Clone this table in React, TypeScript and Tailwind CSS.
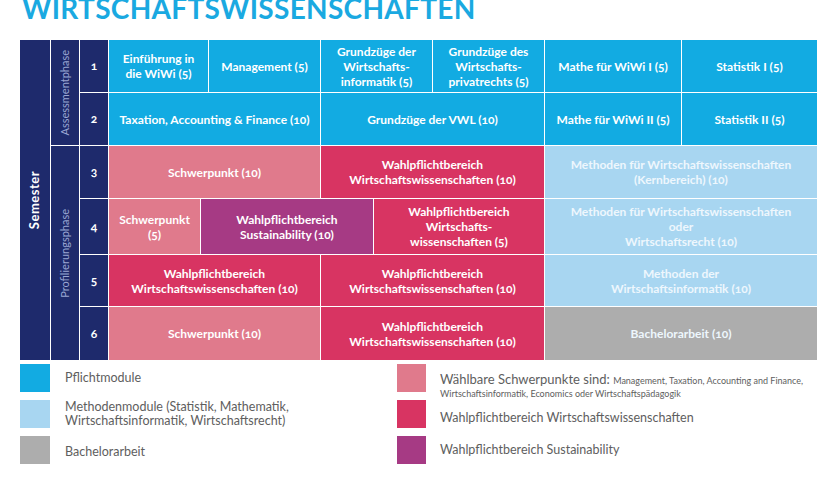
import React from "react";

const CYAN = "bg-[#12abe2]";
const LIGHT = "bg-[#a8d6f1]";
const PINK = "bg-[#e07a8c]";
const RED = "bg-[#d83462]";
const PURPLE = "bg-[#a63a84]";
const GREY = "bg-[#adadad]";
const NAVY = "bg-[#1e2a6c]";

function Cell({ bg, span, children, light }: { bg: string; span: string; children: React.ReactNode; light?: boolean }) {
  return (
    <div
      className={`${bg} ${span} flex items-center justify-center text-center px-1 text-[12px] leading-[15px] font-bold oldstyle-nums ${
        light ? "text-[#eef7fd]" : "text-white"
      }`}
    >
      <span>{children}</span>
    </div>
  );
}

function Num({ n }: { n: string }) {
  return (
    <div className={`${NAVY} flex items-center justify-center text-white font-bold text-[12px] oldstyle-nums`}>{n}</div>
  );
}

function LegendItem({ color, children, top }: { color: string; children: React.ReactNode; top?: boolean }) {
  return (
    <div className={`flex ${top ? "items-start" : "items-center"} h-[28px]`}>
      <div className={`${color} w-[30px] h-[28px] shrink-0`} />
      <div className="ml-[15px] text-[12.5px] leading-[14px] text-[#5e5e5e]">{children}</div>
    </div>
  );
}

export default function App() {
  return (
    <div className="w-[840px] h-[480px] bg-white overflow-hidden font-['Lato',sans-serif]">
      <h1 className="-mt-[6px] ml-[22px] text-[28px] leading-[28px] font-bold text-[#1aa9e1] whitespace-nowrap tracking-[0.3px]">
        WIRTSCHAFTSWISSENSCHAFTEN
      </h1>
      <div className="mt-[18px] ml-[20px] w-[797px] grid grid-cols-[30px_28px_28px_91px_7px_111px_52px_58px_111px_136px_135px] grid-rows-[52px_52px_52px_55px_51px_53px] gap-px bg-white">
        <div className={`${NAVY} row-span-6 flex items-center justify-center`}>
          <span className="[writing-mode:vertical-rl] rotate-180 text-white font-bold text-[13px] tracking-[0.5px]">Semester</span>
        </div>
        <div className={`${NAVY} row-span-2 flex items-center justify-center`}>
          <span className="[writing-mode:vertical-rl] rotate-180 text-[#9aa6d3] text-[11px]">Assessmentphase</span>
        </div>
        <Num n="1" />
        <Cell bg={CYAN} span="col-span-2">Einführung in<br />die WiWi (5)</Cell>
        <Cell bg={CYAN} span="">Management (5)</Cell>
        <Cell bg={CYAN} span="col-span-2">Grundzüge der<br />Wirtschafts-<br />informatik (5)</Cell>
        <Cell bg={CYAN} span="">Grundzüge des<br />Wirtschafts-<br />privatrechts (5)</Cell>
        <Cell bg={CYAN} span="">Mathe für WiWi I (5)</Cell>
        <Cell bg={CYAN} span="">Statistik I (5)</Cell>

        <Num n="2" />
        <Cell bg={CYAN} span="col-span-3">Taxation, Accounting &amp; Finance (10)</Cell>
        <Cell bg={CYAN} span="col-span-3">Grundzüge der VWL (10)</Cell>
        <Cell bg={CYAN} span="">Mathe für WiWi II (5)</Cell>
        <Cell bg={CYAN} span="">Statistik II (5)</Cell>

        <div className={`${NAVY} row-span-4 flex items-center justify-center`}>
          <span className="[writing-mode:vertical-rl] rotate-180 text-[#9aa6d3] text-[11px]">Profilierungsphase</span>
        </div>
        <Num n="3" />
        <Cell bg={PINK} span="col-span-3">Schwerpunkt (10)</Cell>
        <Cell bg={RED} span="col-span-3">Wahlpflichtbereich<br />Wirtschaftswissenschaften (10)</Cell>
        <Cell bg={LIGHT} span="col-span-2" light>Methoden für Wirtschaftswissenschaften<br />(Kernbereich) (10)</Cell>

        <Num n="4" />
        <Cell bg={PINK} span="">Schwerpunkt<br />(5)</Cell>
        <Cell bg={PURPLE} span="col-span-3">Wahlpflichtbereich<br />Sustainability (10)</Cell>
        <Cell bg={RED} span="col-span-2">Wahlpflichtbereich<br />Wirtschafts-<br />wissenschaften (5)</Cell>
        <Cell bg={LIGHT} span="col-span-2" light>Methoden für Wirtschaftswissenschaften<br />oder<br />Wirtschaftsrecht (10)</Cell>

        <Num n="5" />
        <Cell bg={RED} span="col-span-3">Wahlpflichtbereich<br />Wirtschaftswissenschaften (10)</Cell>
        <Cell bg={RED} span="col-span-3">Wahlpflichtbereich<br />Wirtschaftswissenschaften (10)</Cell>
        <Cell bg={LIGHT} span="col-span-2" light>Methoden der<br />Wirtschaftsinformatik (10)</Cell>

        <Num n="6" />
        <Cell bg={PINK} span="col-span-3">Schwerpunkt (10)</Cell>
        <Cell bg={RED} span="col-span-3">Wahlpflichtbereich<br />Wirtschaftswissenschaften (10)</Cell>
        <Cell bg={GREY} span="col-span-2" light>Bachelorarbeit (10)</Cell>
      </div>

      <div className="mt-[4px] ml-[20px] flex">
        <div className="w-[377px] flex flex-col gap-[8px]">
          <LegendItem color={CYAN}>Pflichtmodule</LegendItem>
          <LegendItem color={LIGHT}>Methodenmodule (Statistik, Mathematik,<br />Wirtschaftsinformatik, Wirtschaftsrecht)</LegendItem>
          <LegendItem color={GREY}><span className="relative top-[2px]">Bachelorarbeit</span></LegendItem>
        </div>
        <div className="flex flex-col gap-[8px]">
          <div className="flex items-start h-[28px]">
            <div className={`${PINK} w-[29px] h-[28px] shrink-0`} />
            <div className="ml-[14px] pt-[8px] text-[#5e5e5e] leading-[12px]">
              <div className="whitespace-nowrap">
                <span className="text-[13px]">Wählbare Schwerpunkte sind: </span>
                <span className="text-[9px]">Management, Taxation, Accounting and Finance,</span>
              </div>
              <div className="text-[9px] leading-[12px] mt-[1px]">Wirtschaftsinformatik, Economics oder Wirtschaftspädagogik</div>
            </div>
          </div>
          <div className="flex items-center h-[28px]">
            <div className={`${RED} w-[29px] h-[28px] shrink-0`} />
            <div className="ml-[14px] pt-[8px] text-[12.5px] text-[#5e5e5e]">Wahlpflichtbereich Wirtschaftswissenschaften</div>
          </div>
          <div className="flex items-center h-[28px]">
            <div className={`${PURPLE} w-[29px] h-[28px] shrink-0`} />
            <div className="ml-[14px] text-[12.5px] text-[#5e5e5e]">Wahlpflichtbereich Sustainability</div>
          </div>
        </div>
      </div>
    </div>
  );
}
